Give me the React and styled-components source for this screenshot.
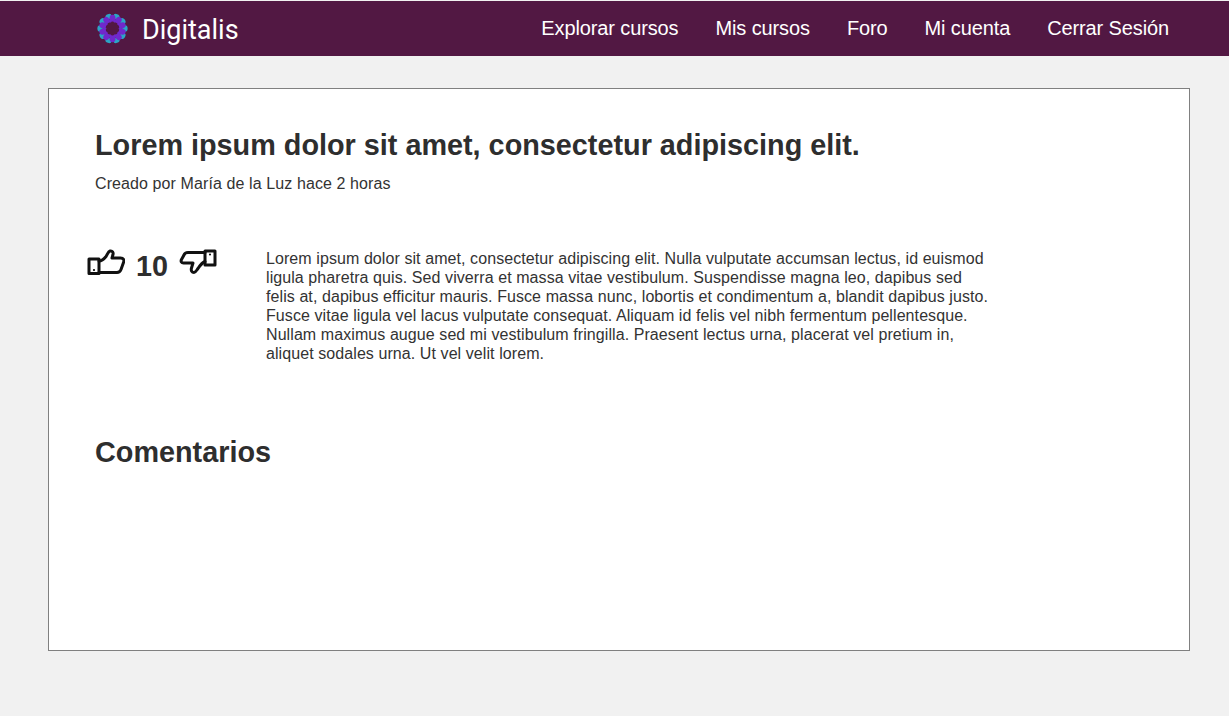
import styled, { createGlobalStyle } from "styled-components"

const GlobalStyle = createGlobalStyle`
    html, body {
        margin: 0;
        padding: 0;
        background: #f1f1f1;
        font-family: "Liberation Sans", Arial, sans-serif;
        color: #2e2e2e;
    }
`

const Page = styled.div`
    min-height: 716px;
    padding-top: 1px;
    box-sizing: border-box;
`

const Header = styled.header`
    height: 55px;
    background: #521843;
    display: flex;
    align-items: center;
    justify-content: space-between;
    padding: 0 60px 0 97px;
`

const Brand = styled.div`
    display: flex;
    align-items: center;
    gap: 14px;
    font-family: Roboto, sans-serif;
    font-size: 27px;
    line-height: 32px;
    color: #fff;

    span {
        padding-top: 2px;
    }
`

const Nav = styled.nav`
    display: flex;
    gap: 37px;
`

const NavLink = styled.a`
    font-size: 20px;
    letter-spacing: -0.12px;
    color: #fff;
    text-decoration: none;
`

const Card = styled.main`
    margin: 32px 39px 0 48px;
    height: 563px;
    box-sizing: border-box;
    background: #fff;
    border: 1px solid #808080;
    padding: 39px 38px 0 46px;
`

const Title = styled.h1`
    margin: 0;
    font-size: 28.8px;
    line-height: 34px;
    font-weight: bold;
`

const Meta = styled.p`
    margin: 12px 0 0;
    font-size: 16px;
    line-height: 19px;
    letter-spacing: 0.1px;
    color: #333;
`

const PostRow = styled.section`
    display: flex;
    margin-top: 56px;
    margin-left: -8px;
`

const Votes = styled.div`
    width: 179px;
    flex-shrink: 0;
    display: flex;
    align-items: flex-start;
    gap: 11px;
`

const VoteCount = styled.span`
    font-size: 28.8px;
    line-height: 34px;
    font-weight: bold;
`

const VoteIcon = styled.svg`
    width: 38px;
    height: 30px;
    fill: none;
    stroke: #111;
    stroke-width: 3;
    stroke-linejoin: round;
    stroke-linecap: round;
    flex-shrink: 0;
`

const PostBody = styled.p`
    margin: 0;
    width: 725px;
    font-size: 16px;
    line-height: 19px;
    letter-spacing: 0.08px;
    color: #333;
`

const SubTitle = styled.h2`
    margin: 72px 0 0;
    font-size: 28.8px;
    line-height: 34px;
    font-weight: bold;
`

const LogoPetal = ({ angle, color, r, rx, ry }) => (
    <ellipse cx="16" cy={16 - r} rx={rx} ry={ry} fill={color} transform={`rotate(${angle} 16 16)`} />
)

const Logo = () => {
    const angles = [0, 36, 72, 108, 144, 180, 216, 252, 288, 324]
    return (
        <svg width="31" height="31" viewBox="0 0 32 32">
            {angles.map((a) => <LogoPetal key={a} angle={a + 18} color="#2ba6c6" r={12.8} rx={3.4} ry={2.8} />)}
            {angles.map((a) => <LogoPetal key={a} angle={a} color="#7028cc" r={10.5} rx={3.1} ry={3.6} />)}
            <circle cx="16" cy="16" r="7" fill="#521843" />
            {angles.map((a) => <LogoPetal key={a} angle={a + 18} color="#7028cc" r={8} rx={1.6} ry={1.6} />)}
        </svg>
    )
}

const ThumbUp = () => (
    <VoteIcon viewBox="0 0 38 30">
        <path d="M2 10h10v14.500H2z" />
        <path d="M12 12c3 0 5-2 7-4.500 1.500-2 2-5 4-5.500 2.500-.5 3.500 1.500 3 3.500l-1 3.500h8.500c3 0 4 2 3 4.500l-2.500 7c-.8 2-2 3-4 3H12" />
        <circle cx="7" cy="21" r="0.5" fill="#111" stroke-width="1.200" />
    </VoteIcon>
)

const ThumbDown = () => (
    <VoteIcon viewBox="0 0 38 30">
        <path d="M26 2h10v14H26z" />
        <path d="M26 3.500H9c-2 0-3.500 1-4 2.500l-2.500 4.500c-1 2 0 3.500 2 3.500h9.500l-1.500 5c-.8 2.500.5 4.500 2.500 4.500 1.500 0 2.500-2 4-4 2-3 4.500-6 7-7" />
        <circle cx="31" cy="5.500" r="0.5" fill="#111" stroke-width="1.200" />
    </VoteIcon>
)

const App = () => {
    return (
        <Page>
            <GlobalStyle />
            <Header>
                <Brand>
                    <Logo />
                    <span>Digitalis</span>
                </Brand>
                <Nav>
                    <NavLink href="#">Explorar cursos</NavLink>
                    <NavLink href="#">Mis cursos</NavLink>
                    <NavLink href="#">Foro</NavLink>
                    <NavLink href="#">Mi cuenta</NavLink>
                    <NavLink href="#">Cerrar Sesión</NavLink>
                </Nav>
            </Header>

            <Card>
                <Title>Lorem ipsum dolor sit amet, consectetur adipiscing elit.</Title>
                <Meta>Creado por María de la Luz hace 2 horas</Meta>

                <PostRow>
                    <Votes>
                        <ThumbUp />
                        <VoteCount>10</VoteCount>
                        <ThumbDown />
                    </Votes>
                    <PostBody>
                        Lorem ipsum dolor sit amet, consectetur adipiscing elit. Nulla vulputate accumsan lectus, id euismod ligula pharetra quis. Sed viverra et massa vitae vestibulum. Suspendisse magna leo, dapibus sed felis at, dapibus efficitur mauris. Fusce massa nunc, lobortis et condimentum a, blandit dapibus justo. Fusce vitae ligula vel lacus vulputate consequat. Aliquam id felis vel nibh fermentum pellentesque. Nullam maximus augue sed mi vestibulum fringilla. Praesent lectus urna, placerat vel pretium in, aliquet sodales urna. Ut vel velit lorem.
                    </PostBody>
                </PostRow>

                <SubTitle>Comentarios</SubTitle>
            </Card>
        </Page>
    )
}

export default App
